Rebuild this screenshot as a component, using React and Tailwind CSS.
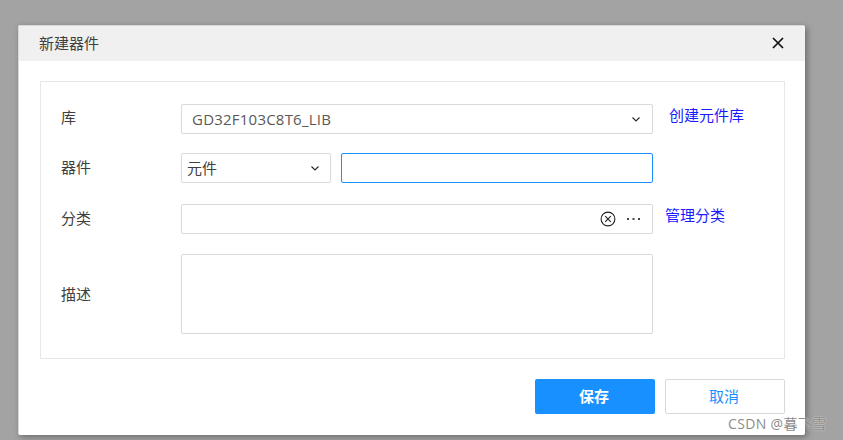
function Chevron() {
  return (
    <svg width="8" height="5" viewBox="0 0 8 5" fill="none" stroke="#262626" strokeWidth="1.1">
      <path d="M0.5 0.5L4 4l3.5-3.5" />
    </svg>
  );
}

export default function App() {
  return (
    <div className="relative w-[843px] h-[440px] overflow-hidden bg-[#a3a3a3] pt-[25px] pl-[18px] text-[15px] text-[#404040] font-['Open_Sans','Noto_Sans_CJK_SC',sans-serif]">
      <div className="w-[787px] h-[410px] bg-white rounded-[2px] border-t border-l border-[#d9d9d9] shadow-[2px_2px_6px_rgba(0,0,0,0.35)] flex flex-col">
        <div className="h-[35px] shrink-0 bg-[#f0f0f0] flex items-center justify-between pl-[20px] pr-[21px]">
          <span>新建器件</span>
          <svg width="12" height="12" viewBox="0 0 12 12" stroke="#111" strokeWidth="1.7" className="mb-[2px]">
            <path d="M1 1l10 10M11 1L1 11" />
          </svg>
        </div>
        <div className="ml-[21px] mt-[20px] w-[745px] h-[278px] border border-[#e8e8e8] pt-[22px] pl-[20px] flex flex-col">
          <div className="flex h-[30px]">
            <div className="w-[120px] pt-[2px]">库</div>
            <div className="w-[472px] h-[30px] border border-[#d9d9d9] rounded-[2px] flex items-center justify-between pl-[10px] pr-[12px]">
              <span className="tracking-[0.22px] text-[#595959]">GD32F103C8T6_LIB</span>
              <Chevron />
            </div>
            <a className="ml-[16px] text-[#1a1aff]">创建元件库</a>
          </div>
          <div className="flex h-[30px] mt-[19px]">
            <div className="w-[120px] flex items-center pb-[1px]">器件</div>
            <div className="w-[150px] h-[30px] border border-[#d9d9d9] rounded-[2px] flex items-center justify-between pl-[5px] pr-[11px]">
              <span>元件</span>
              <Chevron />
            </div>
            <div className="ml-[10px] w-[312px] h-[30px] border border-[#1890ff] rounded-[2px]" />
          </div>
          <div className="flex h-[30px] mt-[21px]">
            <div className="w-[120px] flex items-center pb-[2px]">分类</div>
            <div className="w-[472px] h-[30px] border border-[#d9d9d9] rounded-[2px] flex items-center justify-end pr-[12px]">
              <svg width="16" height="16" viewBox="0 0 16 16" fill="none" stroke="#222" strokeWidth="1.1">
                <circle cx="8" cy="8" r="6.9" />
                <path d="M5.2 5.2l5.6 5.6M10.8 5.2l-5.6 5.6" />
              </svg>
              <svg width="13" height="4" viewBox="0 0 13 4" fill="#444" className="ml-[11px]">
                <rect x="0" y="1" width="2" height="2" />
                <rect x="5.5" y="1" width="2" height="2" />
                <rect x="11" y="1" width="2" height="2" />
              </svg>
            </div>
            <a className="ml-[12px] text-[#1a1aff]">管理分类</a>
          </div>
          <div className="flex h-[80px] mt-[20px]">
            <div className="w-[120px] flex items-center">描述</div>
            <div className="w-[472px] h-[80px] border border-[#d9d9d9] rounded-[2px]" />
          </div>
        </div>
        <div className="mt-[20px] ml-[516px] flex gap-[10px]">
          <button className="w-[120px] h-[35px] pr-[2px] bg-[#1890ff] rounded-[2px] text-white font-bold">保存</button>
          <button className="w-[120px] h-[35px] pr-[2px] bg-white border border-[#d9d9d9] rounded-[2px] text-[#1890ff]">取消</button>
        </div>
      </div>
      <div className="absolute left-[728px] top-[414px] text-[14px] leading-[20px] text-[#8c8c8c] tracking-[0.35px] [text-shadow:0_0_2px_rgba(255,255,255,0.7)]">CSDN @暮飞雪</div>
    </div>
  );
}
